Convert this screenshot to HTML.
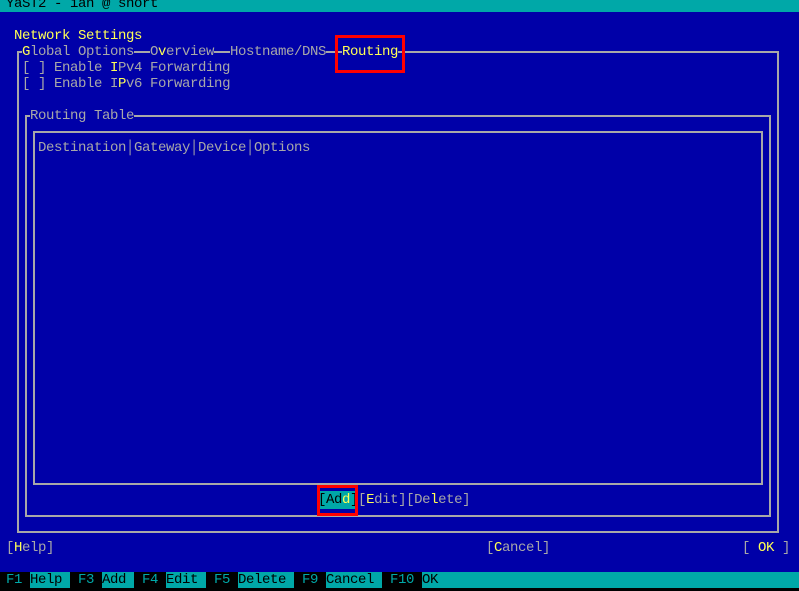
<!DOCTYPE html>
<html><head><meta charset="utf-8"><style>
html,body{margin:0;padding:0}
body{width:799px;height:591px;background:#0000a8;position:relative;overflow:hidden;font-family:"Liberation Mono","DejaVu Sans Mono",monospace;font-size:14px;letter-spacing:-0.4px;font-weight:normal}
.t{position:absolute;white-space:pre;line-height:16px;height:16px;color:#a8a8a8}
.y{color:#ffff54}
.k{color:#000}
.b{background:#0000a8}
.h{position:absolute;background:#a8a8a8;height:2px}
.v{position:absolute;background:#a8a8a8;width:2px}
.red{position:absolute;border:3px solid #f00;box-sizing:border-box}
</style></head><body>
<div style="position:absolute;left:0;top:0;width:799px;height:12px;background:#00a8a8"></div>
<div class="t k" style="left:6px;top:-4px">YaST2 - ian @ snort</div>
<div class="t y" style="left:14px;top:28px">Network Settings</div>

<div class="h" style="left:17px;top:51px;width:762px"></div>
<div class="v" style="left:17px;top:51px;height:482px"></div>
<div class="v" style="left:777px;top:51px;height:482px"></div>
<div class="h" style="left:17px;top:531px;width:762px"></div>
<div class="t b" style="left:22px;top:44px"><span class="y">G</span>lobal Options</div>
<div class="t b" style="left:150px;top:44px">O<span class="y">v</span>erview</div>
<div class="t b" style="left:230px;top:44px">Hostname/DNS</div>
<div class="t b y" style="left:342px;top:44px">Routing</div>

<div class="t" style="left:22px;top:60px">[ ] Enable <span class="y">I</span>Pv4 Forwarding</div>
<div class="t" style="left:22px;top:76px">[ ] Enable I<span class="y">P</span>v6 Forwarding</div>

<div class="h" style="left:25px;top:115px;width:746px"></div>
<div class="v" style="left:25px;top:115px;height:402px"></div>
<div class="v" style="left:769px;top:115px;height:402px"></div>
<div class="h" style="left:25px;top:515px;width:746px"></div>
<div class="t b" style="left:30px;top:108px">Routing Table</div>

<div class="h" style="left:33px;top:131px;width:730px"></div>
<div class="v" style="left:33px;top:131px;height:354px"></div>
<div class="v" style="left:761px;top:131px;height:354px"></div>
<div class="h" style="left:33px;top:483px;width:730px"></div>
<div class="t" style="left:38px;top:140px">Destination│Gateway│Device│Options</div>

<div style="position:absolute;left:318px;top:491px;width:40px;height:18px;background:#00a8a8"></div>
<div class="t" style="left:318px;top:492px"><span class="k">[Ad</span><span class="y">d</span><span class="k">]</span>[<span class="y">E</span>dit][De<span class="y">l</span>ete]</div>
<div class="red" style="left:317px;top:485px;width:41px;height:31px"></div>
<div class="red" style="left:335px;top:35px;width:70px;height:38px"></div>

<div class="t" style="left:6px;top:540px">[<span class="y">H</span>elp]</div>
<div class="t" style="left:486px;top:540px">[<span class="y">C</span>ancel]</div>
<div class="t" style="left:742px;top:540px">[ <span class="y">OK</span> ]</div>

<div style="position:absolute;left:0;top:572px;width:799px;height:16px;background:#00a8a8"></div>
<div style="position:absolute;left:0;top:588px;width:799px;height:3px;background:#000"></div>
<div style="position:absolute;left:0;top:572px;width:30px;height:16px;background:#000"></div>
<div style="position:absolute;left:70px;top:572px;width:32px;height:16px;background:#000"></div>
<div style="position:absolute;left:134px;top:572px;width:32px;height:16px;background:#000"></div>
<div style="position:absolute;left:206px;top:572px;width:32px;height:16px;background:#000"></div>
<div style="position:absolute;left:294px;top:572px;width:32px;height:16px;background:#000"></div>
<div style="position:absolute;left:382px;top:572px;width:40px;height:16px;background:#000"></div>
<div class="t" style="left:6px;top:572px;color:#00a8a8">F1</div>
<div class="t k" style="left:30px;top:572px">Help</div>
<div class="t" style="left:78px;top:572px;color:#00a8a8">F3</div>
<div class="t k" style="left:102px;top:572px">Add</div>
<div class="t" style="left:142px;top:572px;color:#00a8a8">F4</div>
<div class="t k" style="left:166px;top:572px">Edit</div>
<div class="t" style="left:214px;top:572px;color:#00a8a8">F5</div>
<div class="t k" style="left:238px;top:572px">Delete</div>
<div class="t" style="left:302px;top:572px;color:#00a8a8">F9</div>
<div class="t k" style="left:326px;top:572px">Cancel</div>
<div class="t" style="left:390px;top:572px;color:#00a8a8">F10</div>
<div class="t k" style="left:422px;top:572px">OK</div>
</body></html>
